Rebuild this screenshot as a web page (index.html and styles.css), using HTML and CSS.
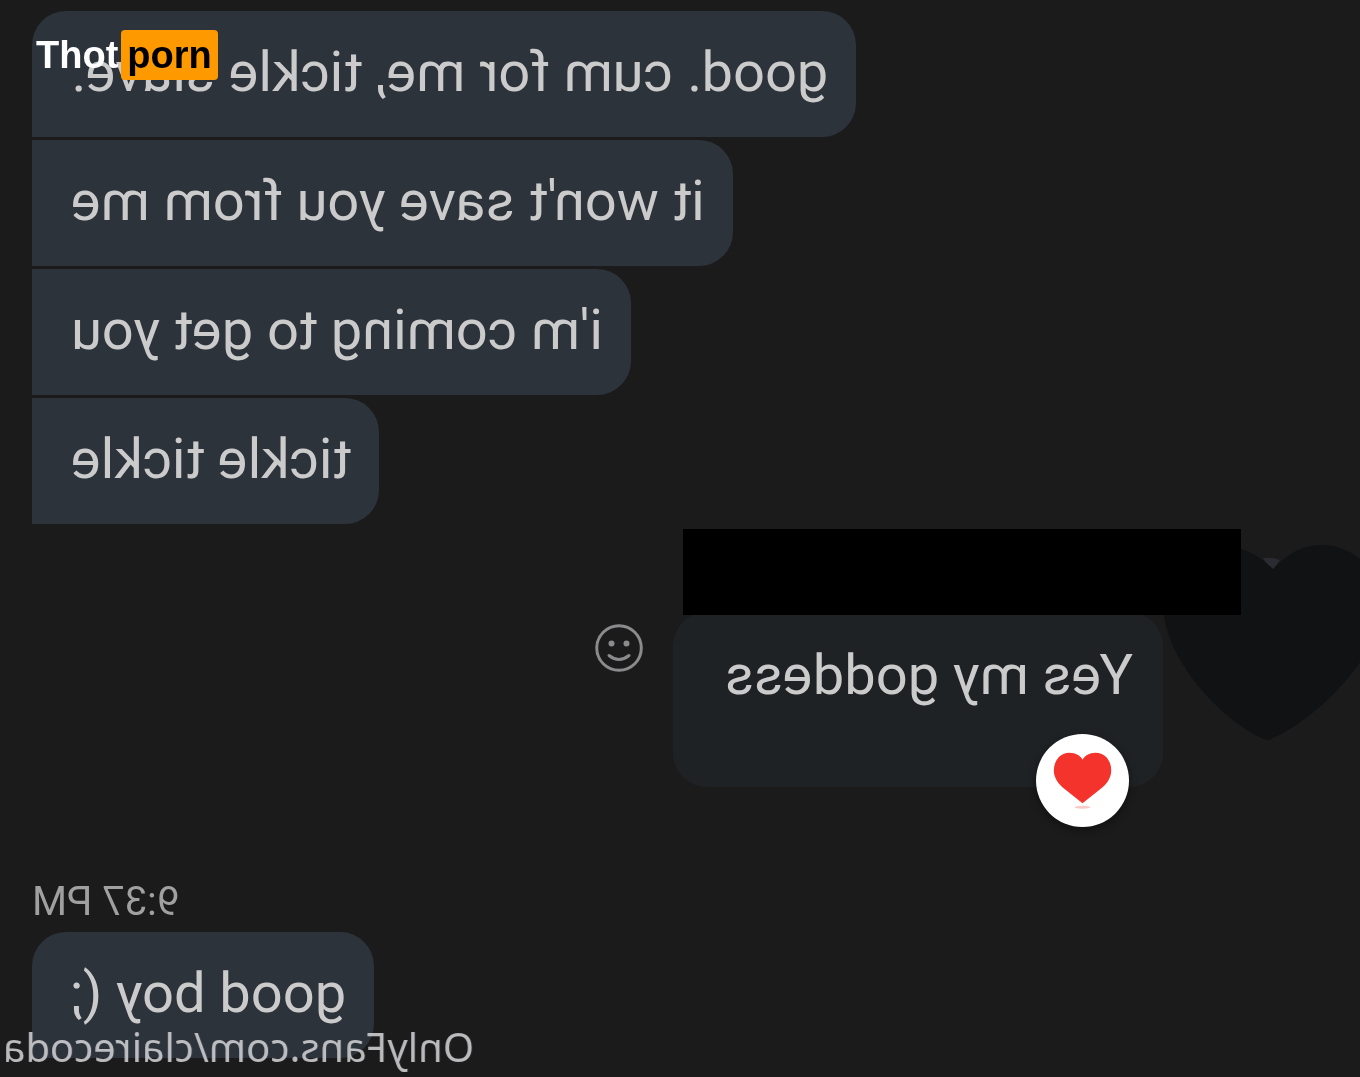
FILE: index.html
```html
<!DOCTYPE html>
<html lang="en">
<head>
<meta charset="utf-8">
<meta name="viewport" content="width=device-width, initial-scale=1">
<title>Chat</title>
<link rel="stylesheet" href="styles.css">
</head>
<body>
<main class="chat">
  <section class="incoming">
    <p class="bubble bubble-first">good. cum for me, tickle slave.</p>
    <p class="bubble bubble-joined">it won't save you from me</p>
    <p class="bubble bubble-joined">i'm coming to get you</p>
    <p class="bubble bubble-joined">tickle tickle</p>
  </section>

  <section class="outgoing">
    <svg class="avatar" viewBox="0 0 197 196" aria-hidden="true">
      <path d="M80 15Q87 12 97 13L88 26Z" fill="#2b2b32"/>
      <path d="M92 195Q90 195 87 193C60 181 22 150 0 117V14C13 4 25 0 38 0C60 0 73 10 87 24C101 10 120 0 142 0C174 0 197 25 197 59C197 112 141 174 97 194Q94 195 92 195Z" fill="#111214"/>
    </svg>
    <div class="bubble bubble-own">Yes my goddess
      <span class="reaction">
        <svg class="reaction-icon" viewBox="0 0 94 94" role="img" aria-label="Heart">
          <path d="M47 70L27 54C21 49 18 43 18 37C18 26 25 19 34 19C40 19 45 22 47 26C49 22 54 19 60 19C69 19 76 26 76 37C76 43 73 49 67 54Z" fill="#f5332d"/>
          <ellipse cx="47" cy="74" rx="8" ry="1.5" fill="#f9c9c6"/>
        </svg>
      </span>
    </div>
    <button class="react" type="button" aria-label="Add reaction">
      <svg class="react-icon" viewBox="0 0 48 48" aria-hidden="true">
        <circle cx="24" cy="24" r="22.3" fill="none" stroke="currentColor" stroke-width="3"/>
        <circle cx="16.5" cy="19.5" r="3" fill="currentColor"/>
        <circle cx="31.5" cy="19.5" r="3" fill="currentColor"/>
        <path d="M14 31.5Q24 39.5 34 31.5" fill="none" stroke="currentColor" stroke-width="3" stroke-linecap="round"/>
      </svg>
    </button>
    <div class="redaction"></div>
  </section>

  <section class="incoming">
    <time class="time">9:37 PM</time>
    <p class="bubble bubble-start">good boy (;</p>
  </section>
</main>
<div class="site-mark"><span>Thot</span><span class="site-tag">porn</span></div>
<div class="watermark">OnlyFans.com/clairecoda</div>
</body>
</html>
```
FILE: styles.css
```css
* {
  box-sizing: border-box;
}

body {
  margin: 0;
  min-height: 100vh;
  position: relative;
  overflow: hidden;
  background: #1b1b1c;
  color: #cbcbcc;
  font-family: Roboto, sans-serif;
}

/* The conversation is shown flipped left to right. */
.chat {
  display: flex;
  flex-direction: column;
  padding: 11px 0 19px;
  transform: scaleX(-1);
}

.incoming {
  display: flex;
  flex-direction: column;
  align-items: flex-end;
  gap: 3px;
  padding-right: 32px;
}

.bubble {
  margin: 0;
  padding: 28px 39px 32px 28px;
  border-radius: 34px;
  background: #2d333b;
  font-size: 56px;
  line-height: 66px;
}

.bubble-first {
  border-bottom-right-radius: 0;
}

.bubble-joined {
  border-top-right-radius: 0;
  border-bottom-right-radius: 0;
}

.bubble-start {
  border-bottom-right-radius: 0;
}

.outgoing {
  display: flex;
  align-items: flex-start;
  position: relative;
  margin: 5px 0 91px;
}

.avatar {
  flex: none;
  width: 197px;
  height: 196px;
  margin-top: 16px;
}

.bubble-own {
  position: relative;
  margin-top: 83px;
  padding: 30px 52px 79px 30px;
  background: #1f2225;
}

.reaction {
  position: absolute;
  left: 34px;
  bottom: -40px;
  width: 93px;
  height: 93px;
  border-radius: 50%;
  background: #fff;
  box-shadow: 0 3px 8px rgba(0, 0, 0, 0.4);
}

.reaction-icon,
.react-icon {
  display: block;
  width: 100%;
  height: 100%;
}

.react {
  width: 48px;
  height: 48px;
  margin: 95px 0 0 30px;
  padding: 0;
  border: 0;
  background: none;
  color: #8b8b8d;
}

.redaction {
  position: absolute;
  top: 0;
  left: 119px;
  width: 558px;
  height: 86px;
  background: #000;
}

.time {
  margin-bottom: 3px;
  color: #a0a0a1;
  font-size: 40px;
  line-height: 48px;
}

.site-mark {
  position: absolute;
  top: 30px;
  left: 36px;
  display: flex;
  gap: 3px;
  color: #fff;
  font: bold 38px/50px "Liberation Sans", Arial, sans-serif;
}

.site-tag {
  padding: 0 6px;
  border-radius: 4px;
  background: #ff9900;
  color: #000;
}

.watermark {
  position: absolute;
  left: 3px;
  bottom: 6px;
  color: rgba(215, 215, 218, 0.85);
  font: 40px/48px "Noto Sans", sans-serif;
  transform: scaleX(-1);
}
```
